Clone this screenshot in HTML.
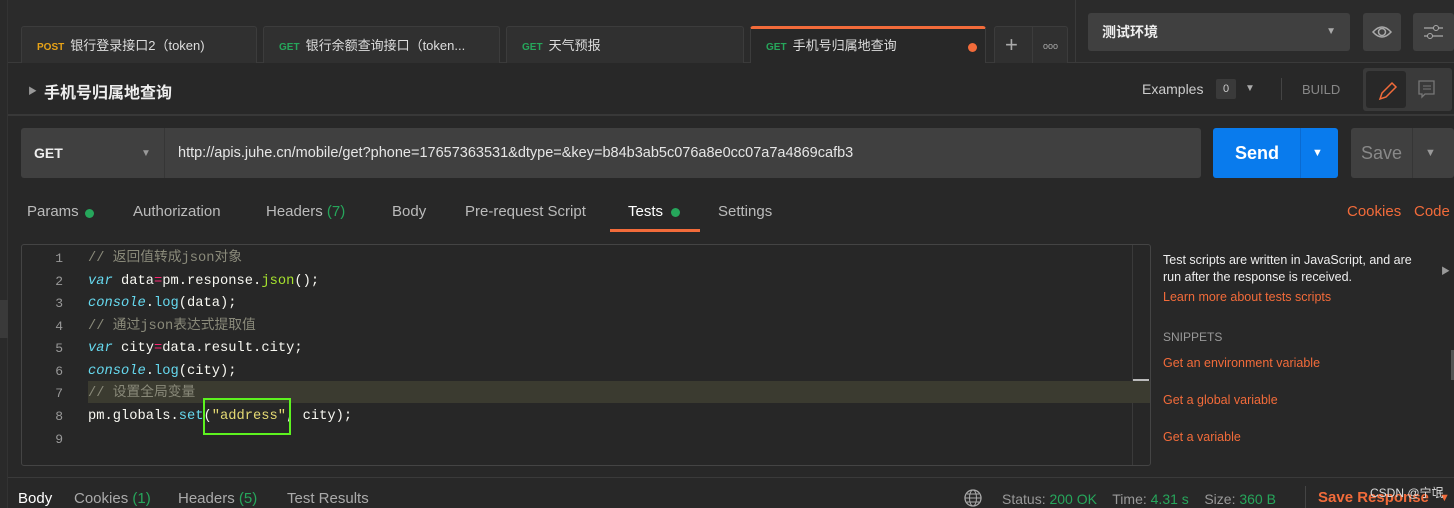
<!DOCTYPE html>
<html><head><meta charset="utf-8"><style>
*{box-sizing:border-box;margin:0;padding:0}
body{width:1454px;height:508px;background:#282828;font-family:"Liberation Sans","Noto Sans CJK SC",sans-serif;color:#ccc;position:relative;overflow:hidden;font-size:14px}
.a{position:absolute}
.tab{position:absolute;top:26px;height:37px;background:#303030;border:1px solid #3c3c3c;border-bottom:none;border-radius:3px 3px 0 0;font-size:13px;color:#ddd;line-height:38px;padding-left:15px;white-space:nowrap}
.m{font-size:10px;font-weight:bold;margin-right:6px}
.g{color:#26a65b}.o{color:#f26b3a}
.code{font-family:"Liberation Mono","Noto Sans CJK SC",monospace;font-size:13.75px;color:#f8f8f2}
.ln{position:absolute;left:30px;width:33px;text-align:right;color:#999;font-family:"Liberation Mono",monospace;font-size:13px;line-height:16px;height:16px}
.cl{position:absolute;left:88px;white-space:pre;line-height:16px;height:16px}
.c{color:#8a8a7a}.k{color:#66d9ef;font-style:italic}.p{color:#f92672}.f{color:#a6e22e}.s{color:#e6db74}
.rt{font-size:12.5px}
</style></head><body>
<div class="a" style="left:0;top:0;width:1454px;height:63px;background:#2b2b2b;border-bottom:1px solid #3a3a3a"></div>
<div class="a" style="left:0;top:0;width:8px;height:508px;background:#2a2a2a;border-right:1px solid #333"></div>
<div class="a" style="left:0;top:300px;width:8px;height:38px;background:#3a3a3a"></div>
<div class="tab" style="left:21px;width:236px"><span class="m" style="color:#e8a317">POST</span>银行登录接口2（token)</div>
<div class="tab" style="left:263px;width:237px"><span class="m g">GET</span>银行余额查询接口（token...</div>
<div class="tab" style="left:506px;width:238px"><span class="m g">GET</span>天气预报</div>
<div class="tab" style="left:750px;width:236px;background:#282828;border-top:3px solid #f26b3a;line-height:34px"><span class="m g">GET</span>手机号归属地查询<span class="a" style="right:8px;top:14px;width:9px;height:9px;border-radius:50%;background:#f26b3a"></span></div>
<div class="tab" style="left:994px;width:74px;padding:0"><span class="a" style="left:10px;top:0;font-size:22px;color:#aaa;line-height:36px">+</span><span class="a" style="left:37px;top:0;bottom:0;border-left:1px solid #3c3c3c"></span><span class="a" style="left:48px;top:0;font-size:9px;color:#aaa;letter-spacing:0">ooo</span></div>
<div class="a" style="left:1075px;top:0;width:1px;height:63px;background:#3a3a3a"></div>
<div class="a" style="left:1088px;top:13px;width:262px;height:38px;background:#404040;border-radius:3px;font-weight:bold;color:#eee;font-size:14px;line-height:38px;padding-left:14px">测试环境<span class="a" style="right:14px;top:0;font-size:10px;color:#aaa">▼</span></div>
<div class="a" style="left:1363px;top:13px;width:38px;height:38px;background:#404040;border-radius:3px"><svg width="38" height="38"><path d="M10 19q9-10 18 0q-9 10-18 0z" fill="none" stroke="#aaa" stroke-width="1.5"/><circle cx="19" cy="19" r="3.5" fill="none" stroke="#aaa" stroke-width="1.5"/></svg></div>
<div class="a" style="left:1413px;top:13px;width:41px;height:38px;background:#404040;border-radius:3px"><svg width="41" height="38"><path d="M11 15h19M11 23h19" stroke="#aaa" stroke-width="1.2"/><circle cx="23" cy="15" r="2.5" fill="#404040" stroke="#aaa"/><circle cx="17" cy="23" r="2.5" fill="#404040" stroke="#aaa"/></svg></div>
<div class="a" style="left:28px;top:84px;font-size:9px;color:#999">▶</div>
<div class="a" style="left:44px;top:79px;font-size:16px;font-weight:bold;color:#eee">手机号归属地查询</div>
<div class="a" style="left:1142px;top:81px;font-size:14px;color:#ccc">Examples</div>
<div class="a" style="left:1216px;top:79px;width:20px;height:20px;background:#3a3a3a;border-radius:2px;font-size:11px;text-align:center;line-height:20px;color:#ccc">0</div>
<div class="a" style="left:1245px;top:83px;font-size:10px;color:#aaa">▼</div>
<div class="a" style="left:1281px;top:78px;width:1px;height:22px;background:#444"></div>
<div class="a" style="left:1302px;top:82px;font-size:13px;color:#888">BUILD</div>
<div class="a" style="left:1363px;top:68px;width:89px;height:43px;background:#3a3a3a;border-radius:3px"></div>
<div class="a" style="left:1366px;top:71px;width:40px;height:37px;background:#282828;border-radius:3px"><svg width="40" height="37"><path d="M14 28l2-6 10-10 4 4-10 10z" fill="none" stroke="#f26b3a" stroke-width="1.5"/></svg></div>
<svg class="a" style="left:1415px;top:78px" width="24" height="24"><path d="M4 3h15v13h-9l-3 3v-3h-3z" fill="none" stroke="#777" stroke-width="1.3"/><path d="M8 8h8M8 11h8" stroke="#777"/></svg>
<div class="a" style="left:8px;top:114px;width:1446px;height:2px;background:#383838"></div>
<div class="a" style="left:21px;top:128px;width:1180px;height:50px;background:#404040;border-radius:3px"></div>
<div class="a" style="left:164px;top:128px;width:1px;height:50px;background:#363636"></div>
<div class="a" style="left:34px;top:145px;font-size:14px;font-weight:bold;color:#eee">GET</div>
<div class="a" style="left:141px;top:148px;font-size:10px;color:#999">▼</div>
<div class="a" style="left:178px;top:145px;font-size:14.5px;color:#e6e6e6">http://apis.juhe.cn/mobile/get?phone=17657363531&amp;dtype=&amp;key=b84b3ab5c076a8e0cc07a7a4869cafb3</div>
<div class="a" style="left:1213px;top:128px;width:125px;height:50px;background:#097bed;border-radius:3px"></div>
<div class="a" style="left:1300px;top:128px;width:1px;height:50px;background:#0a6ad0"></div>
<div class="a" style="left:1235px;top:143px;font-size:18px;font-weight:bold;color:#fff">Send</div>
<div class="a" style="left:1312px;top:147px;font-size:11px;color:#fff">▼</div>
<div class="a" style="left:1351px;top:128px;width:103px;height:50px;background:#404040;border-radius:3px"></div>
<div class="a" style="left:1412px;top:128px;width:1px;height:50px;background:#363636"></div>
<div class="a" style="left:1361px;top:143px;font-size:18px;color:#888">Save</div>
<div class="a" style="left:1425px;top:147px;font-size:11px;color:#999">▼</div>
<div class="a" style="top:203px;left:27px;font-size:15px;color:#bbb;white-space:nowrap">Params <span class="a" style="left:58px;top:6px;width:9px;height:9px;border-radius:50%;background:#26a65b"></span></div>
<div class="a" style="top:203px;left:133px;font-size:15px;color:#bbb">Authorization</div>
<div class="a" style="top:203px;left:266px;font-size:15px;color:#bbb">Headers <span class="g">(7)</span></div>
<div class="a" style="top:203px;left:392px;font-size:15px;color:#bbb">Body</div>
<div class="a" style="top:203px;left:465px;font-size:15px;color:#bbb">Pre-request Script</div>
<div class="a" style="top:203px;left:628px;font-size:15px;color:#fff">Tests</div>
<div class="a" style="left:671px;top:208px;width:9px;height:9px;border-radius:50%;background:#26a65b"></div>
<div class="a" style="left:610px;top:229px;width:90px;height:3px;background:#f26b3a"></div>
<div class="a" style="top:203px;left:718px;font-size:15px;color:#bbb">Settings</div>
<div class="a o" style="top:203px;left:1347px;font-size:15px">Cookies</div>
<div class="a o" style="top:203px;left:1414px;font-size:15px">Code</div>
<div class="a" style="left:21px;top:244px;width:1130px;height:222px;border:1px solid #444;border-radius:3px;background:#272727"></div>
<div class="a" style="left:1132px;top:245px;width:1px;height:220px;background:#3a3a3a"></div>
<div class="a" style="left:1133px;top:379px;width:16px;height:2px;background:#bbb"></div>
<div class="a" style="left:88px;top:381px;width:1062px;height:22px;background:#3b3b30"></div>
<div class="code">
<div class="ln" style="top:251px">1</div><div class="cl c" style="top:251px">// 返回值转成json对象</div>
<div class="ln" style="top:274px">2</div><div class="cl" style="top:274px"><span class="k">var</span> data<span class="p">=</span>pm.response.<span class="f">json</span>();</div>
<div class="ln" style="top:296px">3</div><div class="cl" style="top:296px"><span class="k">console</span>.<span class="k" style="font-style:normal">log</span>(data);</div>
<div class="ln" style="top:319px">4</div><div class="cl c" style="top:319px">// 通过json表达式提取值</div>
<div class="ln" style="top:341px">5</div><div class="cl" style="top:341px"><span class="k">var</span> city<span class="p">=</span>data.result.city;</div>
<div class="ln" style="top:364px">6</div><div class="cl" style="top:364px"><span class="k">console</span>.<span class="k" style="font-style:normal">log</span>(city);</div>
<div class="ln" style="top:386px">7</div><div class="cl c" style="top:386px">// 设置全局变量</div>
<div class="ln" style="top:409px">8</div><div class="cl" style="top:409px">pm.globals.<span class="k" style="font-style:normal">set</span>(<span class="s">"address"</span>, city);</div>
<div class="ln" style="top:432px">9</div>
</div>
<div class="a" style="left:203px;top:398px;width:88px;height:37px;border:2px solid #5df21f"></div>
<div class="a rt" style="left:1163px;top:252px;color:#eee;line-height:17px;width:270px">Test scripts are written in JavaScript, and are run after the response is received.</div>
<div class="a" style="left:1441px;top:264px;font-size:9px;color:#999">▶</div>
<div class="a rt o" style="left:1163px;top:290px">Learn more about tests scripts</div>
<div class="a" style="left:1163px;top:330px;font-size:12px;color:#999">SNIPPETS</div>
<div class="a rt o" style="left:1163px;top:356px">Get an environment variable</div>
<div class="a rt o" style="left:1163px;top:393px">Get a global variable</div>
<div class="a rt o" style="left:1163px;top:430px">Get a variable</div>
<div class="a" style="left:1451px;top:350px;width:3px;height:30px;background:#555"></div>
<div class="a" style="left:8px;top:477px;width:1446px;height:1px;background:#3a3a3a"></div>
<div class="a" style="left:18px;top:490px;font-size:15px;color:#fff">Body</div>
<div class="a" style="left:74px;top:490px;font-size:15px;color:#aaa">Cookies <span class="g">(1)</span></div>
<div class="a" style="left:178px;top:490px;font-size:15px;color:#aaa">Headers <span class="g">(5)</span></div>
<div class="a" style="left:287px;top:490px;font-size:15px;color:#aaa">Test Results</div>
<svg class="a" style="left:963px;top:488px" width="20" height="20"><circle cx="10" cy="10" r="8" fill="none" stroke="#aaa" stroke-width="1.3"/><ellipse cx="10" cy="10" rx="3.5" ry="8" fill="none" stroke="#aaa"/><path d="M2 10h16M4 6h12M4 14h12" stroke="#aaa"/></svg>
<div class="a" style="left:1002px;top:491px;font-size:14px;color:#999;white-space:nowrap">Status: <span class="g">200 OK</span>&nbsp;&nbsp;&nbsp; Time: <span class="g">4.31 s</span>&nbsp;&nbsp;&nbsp; Size: <span class="g">360 B</span></div>
<div class="a" style="left:1305px;top:486px;width:1px;height:22px;background:#444"></div>
<div class="a o" style="left:1318px;top:489px;font-size:15px;font-weight:bold">Save Response</div>
<div class="a o" style="left:1439px;top:492px;font-size:11px">▼</div>
<div class="a" style="left:1370px;top:484px;font-size:12px;color:#ddd">CSDN @宁氓</div>
</body></html>
